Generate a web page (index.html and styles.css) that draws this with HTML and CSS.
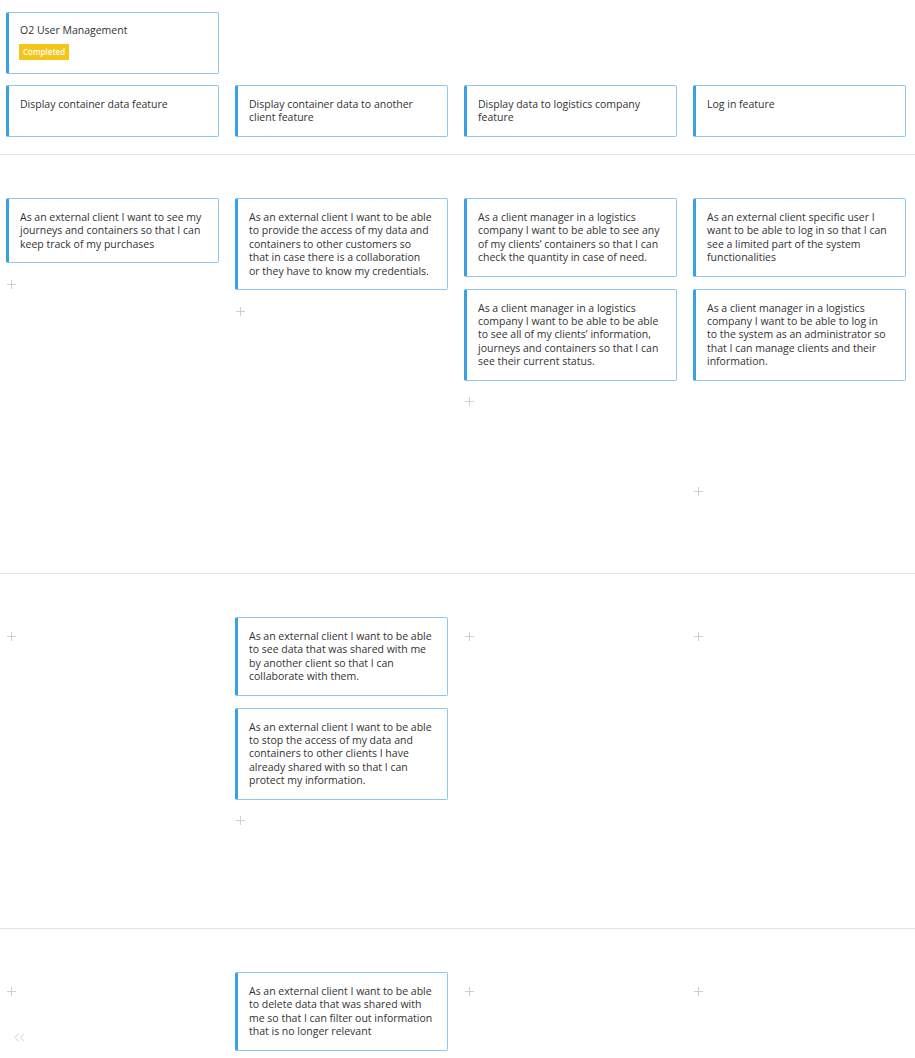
FILE: index.html
```html
<!DOCTYPE html>
<html>
<head>
<meta charset="utf-8">
<link rel="stylesheet" href="styles.css">
</head>
<body>
<div class="board">
  <div class="head">
    <div class="grid epics">
      <div class="card epic">
        <div class="title">O2 User Management</div>
        <span class="badge">Completed</span>
      </div>
    </div>
    <div class="grid features">
      <div class="card feature">Display container data feature</div>
      <div class="card feature">Display container data to another client feature</div>
      <div class="card feature">Display data to logistics company feature</div>
      <div class="card feature">Log in feature</div>
    </div>
  </div>

  <div class="release r1">
    <div class="grid">
      <div class="col">
        <div class="card story">As an external client I want to see my journeys and containers so that I can keep track of my purchases</div>
        <div class="add"><svg width="9" height="9" viewBox="0 0 9 9"><path d="M4.5 0V9M0 4.5H9"/></svg></div>
      </div>
      <div class="col">
        <div class="card story">As an external client I want to be able to provide the access of my data and containers to other customers so that in case there is a collaboration or they have to know my credentials.</div>
        <div class="add"><svg width="9" height="9" viewBox="0 0 9 9"><path d="M4.5 0V9M0 4.5H9"/></svg></div>
      </div>
      <div class="col">
        <div class="card story">As a client manager in a logistics company I want to be able to see any of my clients’ containers so that I can check the quantity in case of need.</div>
        <div class="card story">As a client manager in a logistics company I want to be able to be able to see all of my clients’ information, journeys and containers so that I can see their current status.</div>
        <div class="add"><svg width="9" height="9" viewBox="0 0 9 9"><path d="M4.5 0V9M0 4.5H9"/></svg></div>
      </div>
      <div class="col">
        <div class="card story">As an external client specific user I want to be able to log in so that I can see a limited part of the system functionalities</div>
        <div class="card story">As a client manager in a logistics company I want to be able to log in to the system as an administrator so that I can manage clients and their information.</div>
        <div class="add far"><svg width="9" height="9" viewBox="0 0 9 9"><path d="M4.5 0V9M0 4.5H9"/></svg></div>
      </div>
    </div>
  </div>

  <div class="release r2">
    <div class="grid">
      <div class="col empty"><div class="add"><svg width="9" height="9" viewBox="0 0 9 9"><path d="M4.5 0V9M0 4.5H9"/></svg></div></div>
      <div class="col">
        <div class="card story">As an external client I want to be able to see data that was shared with me by another client so that I can collaborate with them.</div>
        <div class="card story">As an external client I want to be able to stop the access of my data and containers to other clients I have already shared with so that I can protect my information.</div>
        <div class="add"><svg width="9" height="9" viewBox="0 0 9 9"><path d="M4.5 0V9M0 4.5H9"/></svg></div>
      </div>
      <div class="col empty"><div class="add"><svg width="9" height="9" viewBox="0 0 9 9"><path d="M4.5 0V9M0 4.5H9"/></svg></div></div>
      <div class="col empty"><div class="add"><svg width="9" height="9" viewBox="0 0 9 9"><path d="M4.5 0V9M0 4.5H9"/></svg></div></div>
    </div>
  </div>

  <div class="release r3">
    <div class="grid">
      <div class="col empty"><div class="add"><svg width="9" height="9" viewBox="0 0 9 9"><path d="M4.5 0V9M0 4.5H9"/></svg></div></div>
      <div class="col">
        <div class="card story wide">As an external client I want to be able to delete data that was shared with me so that I can filter out information that is no longer relevant</div>
      </div>
      <div class="col empty"><div class="add"><svg width="9" height="9" viewBox="0 0 9 9"><path d="M4.5 0V9M0 4.5H9"/></svg></div></div>
      <div class="col empty"><div class="add"><svg width="9" height="9" viewBox="0 0 9 9"><path d="M4.5 0V9M0 4.5H9"/></svg></div></div>
    </div>
  </div>
</div>
<div class="collapse"><svg width="11" height="9" viewBox="0 0 11 9"><path d="M4.5 0.5L1 4.5L4.5 8.5M10 0.5L6.5 4.5L10 8.5"/></svg></div>
</body>
</html>
```
FILE: styles.css
```css
* { box-sizing: border-box; }
html, body { margin: 0; padding: 0; background: #fff; }
body {
  font-family: "Open Sans", "Noto Sans", sans-serif;
  font-size: 10.5px;
  line-height: 13.4px;
  color: #333;
  width: 915px;
  height: 1058px;
  overflow: hidden;
  position: relative;
}
.board { display: flex; flex-direction: column; }
.grid {
  display: grid;
  grid-template-columns: repeat(4, 213px);
  column-gap: 16px;
  padding-left: 6px;
  align-items: start;
}
.head { padding-top: 12px; padding-bottom: 17px; border-bottom: 1px solid #e2e2e2; }
.features { margin-top: 11px; align-items: stretch; }
.card {
  background: #fff;
  border: 1px solid #8ec7ea;
  border-left: 3px solid #3b9fe3;
  border-radius: 2px;
  padding: 12px 15px 11px 11px;
}
.card.wide { padding-right: 12px; }
.epic { height: 62px; padding-top: 11px; }
.epic .title { margin-bottom: 7px; }
.badge {
  display: inline-block;
  background: #f5c518;
  color: #fff;
  font-size: 8px;
  font-weight: 600;
  line-height: 16px;
  padding: 0 4px;
  margin-left: -1px;
  border-radius: 1px;
}
.feature { min-height: 52px; padding-top: 12px; }
.release { border-bottom: 1px solid #e2e2e2; padding-top: 43px; }
.r1 { height: 419px; }
.r2 { height: 355px; }
.r3 { height: 200px; border-bottom: none; }
.col { display: flex; flex-direction: column; gap: 12px; }
.col.empty { padding-top: 10px; }
.add {
  height: 18px;
  display: flex;
  align-items: center;
  padding-left: 1px;
}
.add svg, .collapse svg { display: block; fill: none; stroke: #cfcfcf; stroke-width: 1; }
.add.far { margin-top: 90px; }
.collapse {
  position: absolute;
  left: 14px;
  top: 1033px;
}
```
